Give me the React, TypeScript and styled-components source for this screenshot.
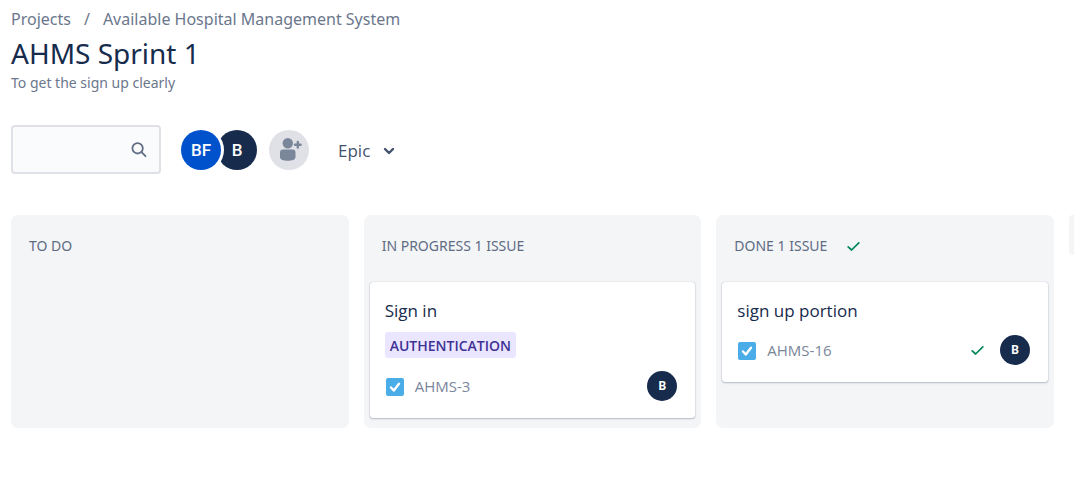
import React from "react";
import styled, { createGlobalStyle } from "styled-components";

const cardFont = `"Segoe UI", "Open Sans", sans-serif`;

const GlobalStyle = createGlobalStyle`
  *, *::before, *::after { box-sizing: border-box; }
  body {
    margin: 0;
    background: #fff;
    color: #172b4d;
    font-family: "Segoe UI", "Noto Sans", sans-serif;
  }
  h1, h2, h3, p, ol, ul { margin: 0; padding: 0; font-weight: 400; }
  ol, ul { list-style: none; }
`;

const Page = styled.main`
  padding: 6px 0 48px 11px;
  overflow: hidden;
`;

const Breadcrumbs = styled.ol`
  display: flex;
  gap: 13px;
  font-size: 16px;
  line-height: 26px;
  color: #6b778c;
`;

const CrumbLink = styled.a`
  color: inherit;
  text-decoration: none;
`;

const Title = styled.h1`
  font-size: 28px;
  line-height: 42px;
`;

const Goal = styled.p`
  font-size: 14px;
  line-height: 18px;
  color: #6b778c;
`;

const Toolbar = styled.div`
  display: flex;
  align-items: center;
  margin-top: 33px;
`;

const SearchBox = styled.label`
  display: flex;
  align-items: center;
  width: 150px;
  height: 49px;
  padding: 0 12px 0 10px;
  border: 2px solid #dfe1e6;
  border-radius: 4px;
  background: #fafbfc;
`;

const SearchInput = styled.input`
  flex: 1;
  min-width: 0;
  border: 0;
  outline: 0;
  background: transparent;
  color: #172b4d;
  font: inherit;
`;

const Avatars = styled.div`
  display: flex;
  margin-left: 20px;
`;

const Avatar = styled.span<{ $size: number; $color: string; $ring?: boolean }>`
  position: relative;
  z-index: ${(p) => (p.$ring ? 1 : 0)};
  display: flex;
  align-items: center;
  justify-content: center;
  flex: none;
  width: ${(p) => p.$size}px;
  height: ${(p) => p.$size}px;
  border-radius: 50%;
  background: ${(p) => p.$color};
  box-shadow: ${(p) => (p.$ring ? "0 0 0 3px #fff" : "none")};
  color: #fff;
  font-family: Roboto, sans-serif;
  font-weight: ${(p) => (p.$size > 30 ? 500 : 700)};
  font-size: ${(p) => (p.$size > 30 ? 17 : 12)}px;

  & + & { margin-left: -4px; }
`;

const AddPeople = styled.button`
  width: 40px;
  height: 40px;
  margin-left: 12px;
  padding: 0;
  border: 0;
  border-radius: 50%;
  background: #dfe1e6;
`;

const EpicFilter = styled.button`
  display: flex;
  align-items: center;
  gap: 12px;
  margin-left: 29px;
  padding: 2px 0 0;
  border: 0;
  background: none;
  color: #42526e;
  font-family: ${cardFont};
  font-size: 17px;
  line-height: 24px;
`;

const Board = styled.div`
  display: grid;
  grid-template-columns: repeat(3, 1fr) 5px;
  gap: 15px;
  margin-top: 41px;
`;

const Column = styled.section`
  min-height: 213px;
  padding: 0 6px 10px;
  border-radius: 7px;
  background: #f4f5f7;
`;

const NextColumn = styled.div`
  height: 40px;
  border-radius: 4px 0 0 4px;
  background: #f4f5f7;
`;

const ColumnHeader = styled.header`
  display: flex;
  align-items: center;
  gap: 20px;
  padding: 21px 12px 26px;
`;

const ColumnTitle = styled.h2`
  font-size: 14px;
  line-height: 20px;
  color: #5e6c84;
`;

const Card = styled.article`
  padding: 17px 18px 17px 15px;
  border-radius: 3px;
  background: #fff;
  box-shadow: 0 1px 2px rgba(9, 30, 66, 0.25), 0 0 1px rgba(9, 30, 66, 0.31);
  font-family: ${cardFont};
`;

const Summary = styled.h3`
  font-size: 17px;
  line-height: 24px;
`;

const EpicTag = styled.span`
  display: block;
  width: fit-content;
  margin-top: 9px;
  padding: 1px 5px 0;
  border-radius: 3px;
  background: #eae6ff;
  color: #403294;
  font-size: 14px;
  font-weight: 600;
  line-height: 25px;
`;

const CardFooter = styled.footer<{ $spaced?: boolean }>`
  display: flex;
  align-items: center;
  margin-top: ${(p) => (p.$spaced ? 13 : 12)}px;
`;

const IssueKey = styled.a`
  margin: 0 auto 0 10px;
  color: #7a869a;
  font-size: 15px;
  line-height: 22px;
  text-decoration: none;
`;

const FooterEnd = styled.div`
  display: flex;
  align-items: center;
  gap: 16px;
`;

const SearchIcon = () => (
  <svg width="16" height="16" viewBox="0 0 16 16" fill="none" stroke="#5e6c84" strokeWidth="1.800" strokeLinecap="round" aria-hidden="true">
    <circle cx="6.600" cy="6.300" r="5.200" />
    <path d="M10.500 10.200l4 4" />
  </svg>
);

const AddPeopleIcon = () => (
  <svg width="40" height="40" viewBox="0 0 40 40" fill="#7a869a" aria-hidden="true">
    <circle cx="18.800" cy="13.300" r="5.200" />
    <path d="M11 22.500a3 3 0 0 1 3-3h9.500a3 3 0 0 1 3 3v4.700c0 2.400-3.600 3.500-7.700 3.500S11 29.600 11 27.200z" />
    <path d="M28.800 12v5.600M26 14.800h5.600" stroke="#7a869a" strokeWidth="2.400" strokeLinecap="round" />
  </svg>
);

const ChevronIcon = () => (
  <svg width="14" height="8" viewBox="0 0 14 8" fill="none" stroke="#42526e" strokeWidth="2.400" strokeLinecap="round" strokeLinejoin="round" aria-hidden="true">
    <path d="M3 2l4 4 4-4" />
  </svg>
);

const DoneIcon = () => (
  <svg width="13" height="10" viewBox="0 0 13 10" fill="none" stroke="#00875a" strokeWidth="1.700" strokeLinecap="round" strokeLinejoin="round" role="img" aria-label="Done">
    <path d="M1.200 5.900l3.400 3.100L11.800 1.900" />
  </svg>
);

const TaskIcon = () => (
  <svg width="20" height="20" viewBox="0 0 20 20" role="img" aria-label="Task">
    <rect x="1" y="2" width="18" height="18" rx="2" fill="#4bade8" />
    <path d="M6 11.500l2.800 3L14 7.800" fill="none" stroke="#fff" strokeWidth="2.400" strokeLinecap="round" strokeLinejoin="round" />
  </svg>
);

interface Issue {
  id: string;
  summary: string;
  epic?: string;
  done?: boolean;
}

const columns: { name: string; issues: Issue[]; done?: boolean }[] = [
  { name: "TO DO", issues: [] },
  { name: "IN PROGRESS 1 ISSUE", issues: [{ id: "AHMS-3", summary: "Sign in", epic: "AUTHENTICATION" }] },
  { name: "DONE 1 ISSUE", done: true, issues: [{ id: "AHMS-16", summary: "sign up portion", done: true }] },
];

const IssueCard = ({ issue }: { issue: Issue }) => (
  <Card>
    <Summary>{issue.summary}</Summary>
    {issue.epic && <EpicTag>{issue.epic}</EpicTag>}
    <CardFooter $spaced={Boolean(issue.epic)}>
      <TaskIcon />
      <IssueKey href="#">{issue.id}</IssueKey>
      <FooterEnd>
        {issue.done && <DoneIcon />}
        <Avatar $size={30} $color="#172b4d">B</Avatar>
      </FooterEnd>
    </CardFooter>
  </Card>
);

export default function App() {
  return (
    <>
      <GlobalStyle />
      <Page>
        <nav aria-label="Breadcrumb">
          <Breadcrumbs>
            <li><CrumbLink href="#">Projects</CrumbLink></li>
            <li aria-hidden="true">/</li>
            <li><CrumbLink href="#">Available Hospital Management System</CrumbLink></li>
          </Breadcrumbs>
        </nav>
        <Title>AHMS Sprint 1</Title>
        <Goal>To get the sign up clearly</Goal>
        <Toolbar>
          <SearchBox>
            <SearchInput type="text" aria-label="Search this board" />
            <SearchIcon />
          </SearchBox>
          <Avatars>
            <Avatar $size={40} $color="#0052cc" $ring>BF</Avatar>
            <Avatar $size={40} $color="#172b4d">B</Avatar>
          </Avatars>
          <AddPeople type="button" aria-label="Add people"><AddPeopleIcon /></AddPeople>
          <EpicFilter type="button">Epic<ChevronIcon /></EpicFilter>
        </Toolbar>
        <Board>
          {columns.map((column) => (
            <Column key={column.name}>
              <ColumnHeader>
                <ColumnTitle>{column.name}</ColumnTitle>
                {column.done && <DoneIcon />}
              </ColumnHeader>
              {column.issues.map((issue) => <IssueCard key={issue.id} issue={issue} />)}
            </Column>
          ))}
          <NextColumn />
        </Board>
      </Page>
    </>
  );
}
